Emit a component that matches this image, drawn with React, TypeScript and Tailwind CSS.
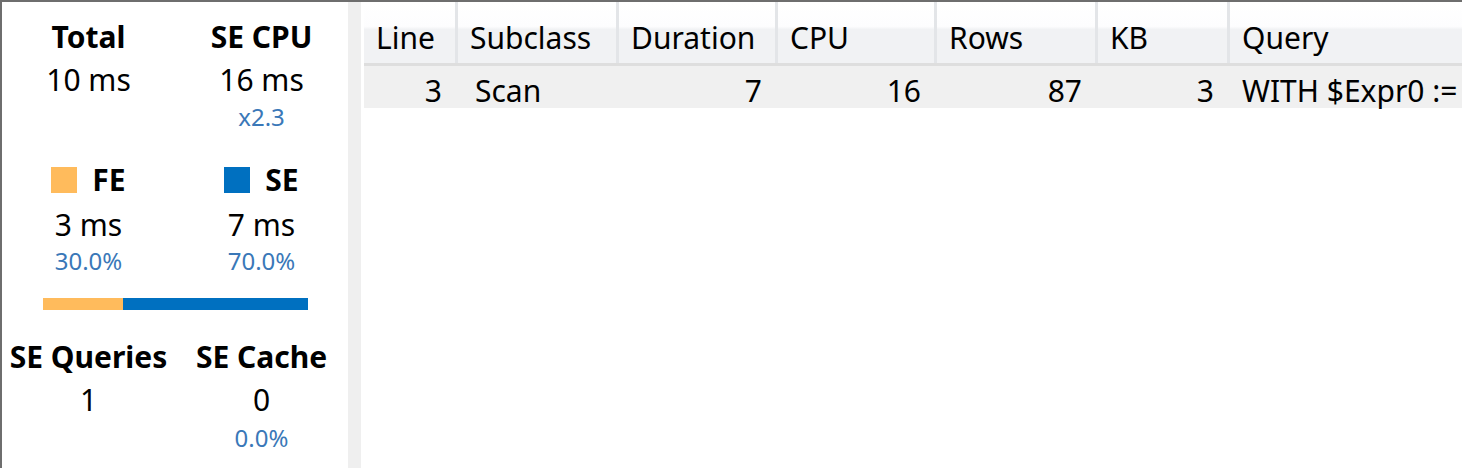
const cols = [
  { name: "Line", w: "w-[94px]" },
  { name: "Subclass", w: "w-[161px]" },
  { name: "Duration", w: "w-[159px]" },
  { name: "CPU", w: "w-[159px]" },
  { name: "Rows", w: "w-[161px]" },
  { name: "KB", w: "w-[132px]" },
];

const row = ["3", "Scan", "7", "16", "87", "3"];

type StatProps = {
  label: React.ReactNode;
  value: string;
  sub?: string;
  valueGap?: string;
  subGap?: string;
};

const Stat = ({ label, value, sub, valueGap = "mt-[3px]", subGap = "mt-[2px]" }: StatProps) => (
  <div className="flex flex-col items-center">
    <div className="text-[30px] font-bold leading-[40px]">{label}</div>
    <div className={`${valueGap} text-[30px] leading-[40px]`}>{value}</div>
    {sub && <div className={`${subGap} text-[24px] leading-[32px] text-[#3a78b8]`}>{sub}</div>}
  </div>
);

const Swatch = ({ color, text }: { color: string; text: string }) => (
  <span className="flex items-center gap-[15px]">
    <span className={`h-[26px] w-[26px] ${color}`} />
    {text}
  </span>
);

export default function App() {
  return (
    <div className="flex h-[468px] w-[1462px] flex-col overflow-hidden bg-white font-['Noto_Sans',sans-serif] text-black">
      <div className="h-[2px] bg-[#6e6e6e]" />
      <div className="flex flex-1">
        <div className="w-[2px] bg-[#6e6e6e]" />

        {/* summary panel */}
        <aside className="w-[346px] pt-[15px]">
          <div className="grid grid-cols-2">
            <Stat label="Total" value="10 ms" />
            <Stat label="SE CPU" value="16 ms" sub="x2.3" subGap="mt-[1px]" />
          </div>

          <div className="mt-[27px] grid grid-cols-2">
            <Stat label={<Swatch color="bg-[#ffbb5c]" text="FE" />} value="3 ms" sub="30.0%" valueGap="mt-[5px]" subGap="mt-0" />
            <Stat label={<Swatch color="bg-[#0070c0]" text="SE" />} value="7 ms" sub="70.0%" valueGap="mt-[5px]" subGap="mt-0" />
          </div>

          <div className="ml-[41px] mt-[21px] flex h-[12px] w-[265px]">
            <div className="w-[30%] bg-[#ffbb5c]" />
            <div className="flex-1 bg-[#0070c0]" />
          </div>

          <div className="mt-[27px] grid grid-cols-2">
            <Stat label="SE Queries" value="1" />
            <Stat label="SE Cache" value="0" sub="0.0%" />
          </div>
        </aside>

        <div className="w-[13px] bg-[#efefef]" />
        <div className="w-[3px] bg-white" />

        {/* grid */}
        <main className="flex-1">
          <div className="flex h-[64px] border-b-[3px] border-[#dedede] bg-[linear-gradient(#ffffff_0%,#fdfdfe_40%,#f1f2f4_45%,#f1f2f4_100%)]">
            {cols.map((c) => (
              <div key={c.name} className={`${c.w} border-r-[3px] border-[#e3e5e8] pl-3 pt-[16px] text-[30px] leading-[40px]`}>
                {c.name}
              </div>
            ))}
            <div className="flex-1 pl-3 pt-[16px] text-[30px] leading-[40px]">Query</div>
          </div>
          <div className="flex bg-[#f0f0f0] pb-[2px] pt-[10px] text-[30px] leading-[30px]">
            {row.map((v, i) => (
              <div key={i} className={`${cols[i].w} ${i === 1 ? "pl-[17px] text-left" : "pr-4 text-right"}`}>
                {v}
              </div>
            ))}
            <div className="flex-1 whitespace-nowrap pl-3">WITH $Expr0 :=</div>
          </div>
        </main>
      </div>
    </div>
  );
}
